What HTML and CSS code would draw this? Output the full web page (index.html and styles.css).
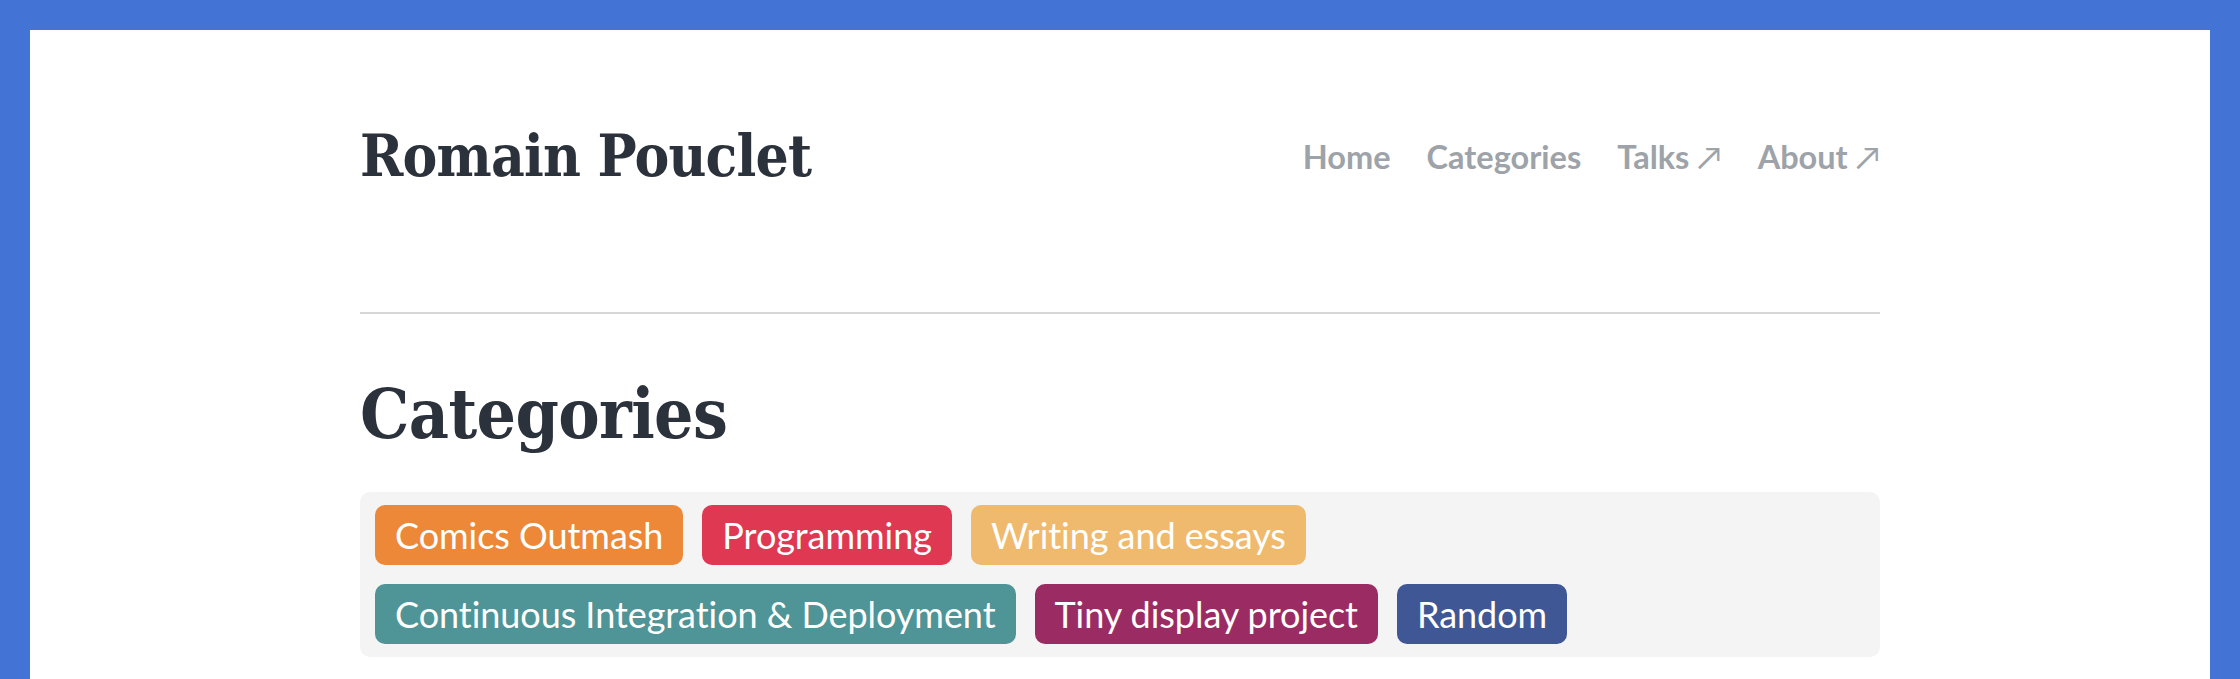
FILE: index.html
```html
<!DOCTYPE html>
<html lang="en">
<head>
<meta charset="utf-8">
<title>Categories - Romain Pouclet</title>
<link rel="stylesheet" href="styles.css">
</head>
<body>
<div class="frame">
  <div class="container">
    <header class="header">
      <a class="site-title" href="#">Romain Pouclet</a>
      <nav class="nav">
        <a class="nav-link" href="#">Home</a>
        <a class="nav-link" href="#">Categories</a>
        <a class="nav-link" href="#">Talks <span class="ext">↗</span></a>
        <a class="nav-link" href="#">About <span class="ext">↗</span></a>
      </nav>
    </header>
    <hr class="rule">
    <main>
      <h1 class="page-title">Categories</h1>
      <div class="tags">
        <a class="tag tag-orange" href="#">Comics Outmash</a>
        <a class="tag tag-red" href="#">Programming</a>
        <a class="tag tag-yellow" href="#">Writing and essays</a>
        <a class="tag tag-teal" href="#">Continuous Integration &amp; Deployment</a>
        <a class="tag tag-purple" href="#">Tiny display project</a>
        <a class="tag tag-blue" href="#">Random</a>
      </div>
    </main>
  </div>
</div>
</body>
</html>
```
FILE: styles.css
```css
* { box-sizing: border-box; }
html, body { margin: 0; padding: 0; }
body {
  background: #ffffff;
  font-family: Lato, "Noto Sans", sans-serif;
  color: #2d333a;
}
.frame {
  border: 30px solid #4373d4;
  border-bottom: 0;
  min-height: 100vh;
  background: #ffffff;
}
.container {
  width: 1520px;
  margin: 0 auto;
}
.header {
  display: flex;
  justify-content: space-between;
  align-items: flex-start;
  padding-top: 94px;
  height: 282px;
}
.site-title {
  font-family: "DejaVu Serif Condensed", "DejaVu Serif", serif;
  font-weight: bold;
  font-stretch: condensed;
  font-size: 58px;
  line-height: 64px;
  letter-spacing: -0.8px;
  color: #2b323b;
  text-decoration: none;
}
.nav {
  display: flex;
  gap: 36px;
  padding-top: 13px;
}
.nav-link {
  font-family: Lato, sans-serif;
  font-weight: bold;
  font-size: 32.5px;
  line-height: 40px;
  color: #9da3a9;
  text-decoration: none;
}
.ext {
  font-weight: normal;
}
.rule {
  border: 0;
  border-top: 2px solid #d6d6d6;
  margin: 0;
}
.page-title {
  font-family: "DejaVu Serif Condensed", "DejaVu Serif", serif;
  font-weight: bold;
  font-stretch: condensed;
  font-size: 69px;
  line-height: 72px;
  letter-spacing: -0.6px;
  color: #2b323b;
  margin: 64px 0 42px;
}
.tags {
  display: flex;
  flex-wrap: wrap;
  gap: 19px 19px;
  padding: 13px 15px;
  background: #f4f4f5;
  border-radius: 10px;
}
.tag {
  font-family: Lato, sans-serif;
  font-size: 36px;
  line-height: 44px;
  letter-spacing: -0.05px;
  padding: 8px 20px;
  color: #ffffff;
  text-decoration: none;
  border-radius: 10px;
}
.tag-orange { background: #ec8837; }
.tag-red { background: #df3852; }
.tag-yellow { background: #efba6d; }
.tag-teal { background: #4f9496; }
.tag-purple { background: #9b2c63; }
.tag-blue { background: #3f5794; }
```
